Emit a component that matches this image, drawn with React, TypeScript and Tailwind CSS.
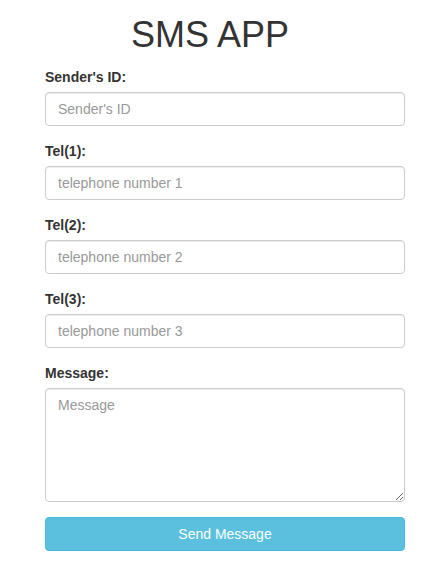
import { FC } from "react";

const fields = [
  { label: "Sender's ID:", placeholder: "Sender's ID" },
  { label: "Tel(1):", placeholder: "telephone number 1" },
  { label: "Tel(2):", placeholder: "telephone number 2" },
  { label: "Tel(3):", placeholder: "telephone number 3" },
];

const inputClass =
  "block w-full rounded-[4px] border border-[#ccc] bg-white px-3 py-[6px] text-[14px] leading-[20px] text-[#555] shadow-[inset_0_1px_1px_rgba(0,0,0,0.075)] outline-none placeholder:text-[#999]";

const App: FC = () => {
  return (
    <div className="min-h-[580px] bg-white font-['Liberation_Sans',Arial,sans-serif] text-[14px] leading-[20px] text-[#333]">
      <div className="w-[360px] ml-[45px]">
        <h1 className="mt-[15px] mb-[12px] pr-[30px] text-center text-[36px] leading-[39.6px] font-normal">
          SMS APP
        </h1>
        <form onSubmit={(e) => e.preventDefault()}>
          {fields.map((f) => (
            <div key={f.label} className="mb-[15px]">
              <label className="mb-[5px] block font-bold">{f.label}</label>
              <input
                type="text"
                placeholder={f.placeholder}
                className={`${inputClass} h-[34px]`}
              />
            </div>
          ))}
          <div className="mb-[15px]">
            <label className="mb-[5px] block font-bold">Message:</label>
            <textarea
              rows={5}
              placeholder="Message"
              className={`${inputClass} h-[114px] resize-y`}
            />
          </div>
          <button
            type="submit"
            className="block h-[34px] w-full rounded-[4px] border border-[#46b8da] bg-[#5bc0de] text-[14px] text-white"
          >
            Send Message
          </button>
        </form>
      </div>
    </div>
  );
};

export default App;
